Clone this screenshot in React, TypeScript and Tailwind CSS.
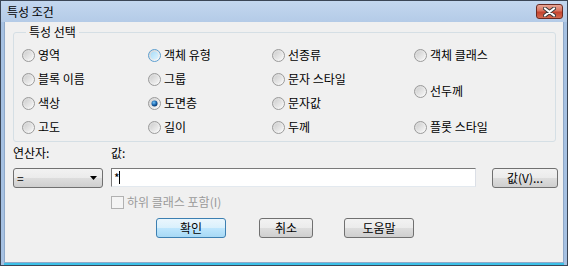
import React from "react";

const font = { fontFamily: '"Noto Sans CJK KR", "Noto Sans", sans-serif' };

type RadioState = "off" | "hover" | "on";

function Radio({ state, id }: { state: RadioState; id: string }) {
  return (
    <svg width="13" height="13" viewBox="0 0 13 13" className="shrink-0">
      <defs>
        <linearGradient id={`o${id}`} x1="0" y1="0" x2="1" y2="1">
          <stop offset="0" stopColor="#d0d0d0" />
          <stop offset="1" stopColor="#ffffff" />
        </linearGradient>
        <linearGradient id={`i${id}`} x1="0" y1="0" x2="1" y2="1">
          {state === "hover" ? (
            <>
              <stop offset="0" stopColor="#a8dcf8" />
              <stop offset="1" stopColor="#dff3fd" />
            </>
          ) : (
            <>
              <stop offset="0" stopColor="#cfcfcf" />
              <stop offset="1" stopColor="#f4f4f4" />
            </>
          )}
        </linearGradient>
        <radialGradient id={`d${id}`} cx="0.4" cy="0.35" r="0.6">
          <stop offset="0" stopColor="#7cc6f4" />
          <stop offset="0.6" stopColor="#1f6fb8" />
          <stop offset="1" stopColor="#0d3d75" />
        </radialGradient>
      </defs>
      <circle cx="6.5" cy="6.5" r="6" fill={`url(#o${id})`} stroke={state === "hover" ? "#5c9fd0" : "#9a9a9a"} strokeWidth="1" />
      <circle cx="6.5" cy="6.5" r="4" fill={`url(#i${id})`} />
      {state === "on" && <circle cx="6.5" cy="6.5" r="3" fill={`url(#d${id})`} />}
    </svg>
  );
}

function Item({ label, state = "off", id }: { label: string; state?: RadioState; id: string }) {
  return (
    <div className="flex items-center gap-[3px] h-full">
      <Radio state={state} id={id} />
      <span className="text-[12px] leading-[14px] text-black whitespace-nowrap">{label}</span>
    </div>
  );
}

function Btn({ label, w, def = false }: { label: string; w: string; def?: boolean }) {
  return (
    <button
      className={`${w} h-[20px] rounded-[3px] border text-[12px] leading-[14px] text-black flex items-center justify-center ${
        def
          ? "border-[#3c7fb1] bg-[linear-gradient(#eaf6fd_0%,#d9f0fc_50%,#bee6fd_51%,#a7d9f5_100%)]"
          : "border-[#707070] bg-[linear-gradient(#f2f2f2_0%,#ebebeb_50%,#dddddd_51%,#cfcfcf_100%)]"
      }`}
    >
      {label}
    </button>
  );
}

export default function App() {
  return (
    <div className="w-[568px] h-[266px] border border-[#3b4656] bg-[#a6c1e2] flex flex-col" style={font}>
      <div className="h-[21px] flex items-center justify-between pl-[6px] pr-[4px] bg-[linear-gradient(#c3d7ef,#b4cbe7)]">
        <span className="text-[12px] leading-[14px] text-black">특성 조건</span>
        <div className="w-[27px] h-[15px] rounded-[3px] border border-[#6b2a22] bg-[linear-gradient(#e8a696_0%,#d7735f_45%,#c4432e_55%,#d36a50_100%)] flex items-center justify-center">
          <svg width="13" height="10" viewBox="0 0 13 10">
            <path d="M2 1.5 L11 8.5 M11 1.5 L2 8.5" stroke="#3a3a3a" strokeWidth="4" strokeLinecap="round" />
            <path d="M2 1.5 L11 8.5 M11 1.5 L2 8.5" stroke="#ffffff" strokeWidth="2.2" strokeLinecap="round" />
          </svg>
        </div>
      </div>
      <div className="flex-1 mx-[3px] bg-[#f0f0f0] border-l border-r border-[#8fa9c9] flex flex-col">
        <fieldset className="ml-[8px] mr-[7px] mt-[2px] border border-[#d5dfe5] rounded-[3px] pl-[8px] pt-[3px] pb-[2px]">
          <legend className="ml-[4px] px-[3px] text-[12px] leading-[16px] text-black">특성 선택</legend>
          <div className="grid grid-cols-[126px_124px_142px_1fr] grid-rows-[24px_24px_24px_24px]">
            <Item id="a1" label="영역" />
            <Item id="b1" label="객체 유형" state="hover" />
            <Item id="c1" label="선종류" />
            <Item id="d1" label="객체 클래스" />
            <Item id="a2" label="블록 이름" />
            <Item id="b2" label="그룹" />
            <Item id="c2" label="문자 스타일" />
            <div className="row-span-2">
              <Item id="d2" label="선두께" />
            </div>
            <Item id="a3" label="색상" />
            <Item id="b3" label="도면층" state="on" />
            <Item id="c3" label="문자값" />
            <Item id="a4" label="고도" />
            <Item id="b4" label="길이" />
            <Item id="c4" label="두께" />
            <Item id="d4" label="플롯 스타일" />
          </div>
        </fieldset>
        <div className="flex mt-[4px] pl-[8px] text-[12px] leading-[14px] text-black">
          <span className="w-[98px]">연산자:</span>
          <span>값:</span>
        </div>
        <div className="flex items-start mt-[8px] pl-[8px]">
          <div className="w-[90px] h-[20px] rounded-[3px] border border-[#707070] bg-[linear-gradient(#f2f2f2_0%,#ebebeb_50%,#dddddd_51%,#cfcfcf_100%)] flex items-center justify-between pl-[3px] pr-[5px]">
            <span className="text-[12px] leading-[14px] text-black">=</span>
            <svg width="7" height="4" viewBox="0 0 7 4">
              <path d="M0 0 H7 L3.5 4 Z" fill="#000" />
            </svg>
          </div>
          <div className="ml-[8px] w-[365px] h-[19px] bg-white border border-[#7a7a7a] border-b-[#e3e9ef] border-r-[#dbdfe6] flex items-center pl-[2px]">
            <span className="text-[12px] leading-[14px] text-black">*</span>
            <span className="w-px h-[13px] bg-black -ml-px" />
          </div>
          <div className="ml-[16px]">
            <Btn label="값(V)..." w="w-[66px]" />
          </div>
        </div>
        <div className="flex items-center mt-[7px] pl-[106px] gap-[3px]">
          <span className="w-[13px] h-[13px] border border-[#b1b1b1] bg-[#f4f4f4]" />
          <span className="text-[12px] leading-[14px] text-[#9a9a9a]">하위 클래스 포함(I)</span>
        </div>
        <div className="flex mt-[9px] pl-[151px]">
          <Btn label="확인" w="w-[70px]" def />
          <div className="ml-[33px]">
            <Btn label="취소" w="w-[54px]" />
          </div>
          <div className="ml-[31px]">
            <Btn label="도움말" w="w-[70px]" />
          </div>
        </div>
      </div>
      <div className="h-[3px] mx-[3px] border-t border-[#8fa9c9] bg-[#3cc0e8]" />
    </div>
  );
}
